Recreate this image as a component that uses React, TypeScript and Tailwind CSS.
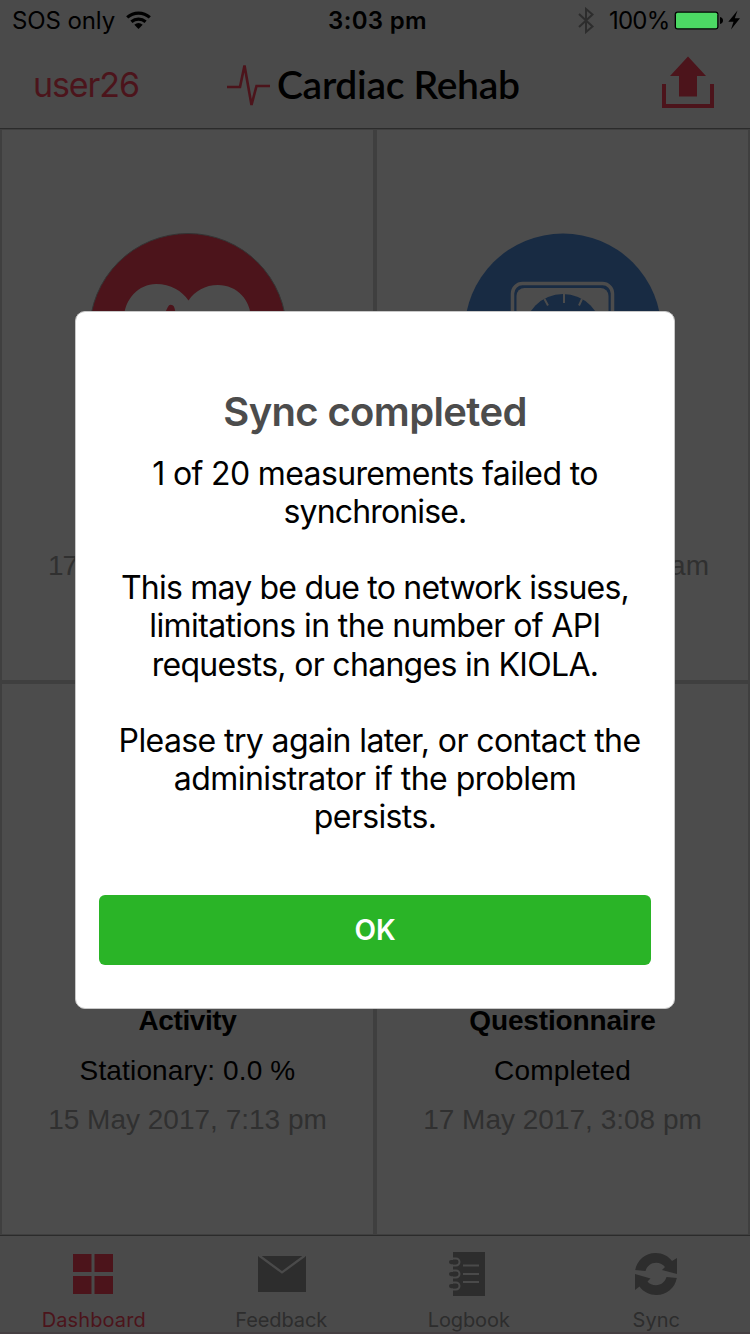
import React from "react";

const INTER = "font-['Inter','Liberation_Sans',sans-serif]";
const HELV = "font-['Liberation_Sans',sans-serif]";

function StatusBar() {
  return (
    <div className="flex h-10 items-center justify-between pl-3 pr-[9px] text-[24px] leading-10 text-black">
      <div className="flex w-[230px] items-center">
        <span className="w-[114px] whitespace-nowrap pt-0.5 tracking-[-0.1px]">SOS only</span>
        <svg className="h-[20px] w-[26px]" viewBox="0 0 26 20" fill="none" stroke="#000" strokeWidth="3.2">
          <path d="M1.2 7.4A17 17 0 0 1 23.8 7.4" />
          <path d="M5.4 11.7A11 11 0 0 1 19.6 11.7" />
          <path d="M12.5 19L8.3 14.8Q12.5 11.4 16.7 14.8Z" fill="#000" stroke="none" />
        </svg>
      </div>
      <span className="whitespace-nowrap pl-0.5 pt-0.5 font-semibold tracking-[0.3px]">3:03 pm</span>
      <div className="flex w-[230px] items-center justify-end">
        <svg className="mr-[15px] h-[27px] w-[16px]" viewBox="0 0 16 27" fill="none" stroke="#2d2d2d" strokeWidth="2">
          <path d="M1 7L14.5 19.5L8 25V2L14.5 7.500L1 20" />
        </svg>
        <span className="w-[65px] whitespace-nowrap pt-0.5 tracking-[-0.8px]">100%</span>
        <svg className="h-[20px] w-[67px]" viewBox="0 0 67 20">
          <rect x="0.700" y="1.500" width="43.800" height="18" rx="3" fill="#000" />
          <rect x="2" y="2.800" width="41.200" height="15.400" rx="1.500" fill="#4cd964" />
          <path d="M46 7Q49 7.600 49 10.500T46 14Z" />
          <path d="M63.500 0.500L54.300 11.700H59.500L57 19.500L66 8.300H60.800Z" />
        </svg>
      </div>
    </div>
  );
}

function NavBar() {
  return (
    <div className="flex h-[88px] items-center pl-[33px] text-[#4c141b]">
      <span className="w-[194px] whitespace-nowrap text-[34px] tracking-[-1.1px]">user26</span>
      <svg className="h-[46px] w-[44px]" viewBox="0 0 44 46" fill="none" stroke="#4c141b" strokeWidth="2.600">
        <path d="M0 26H13L17.500 4.500L24.500 44L29.500 25H43" />
      </svg>
      <span className="ml-[6px] w-[384px] whitespace-nowrap font-['Lato',sans-serif] text-[39px] font-semibold tracking-[-0.3px] text-black">Cardiac Rehab</span>
      <svg className="-mt-[6px] h-[54px] w-[54px]" viewBox="0 0 54 54">
        <path d="M27 2.500L45 22H36V42.500H18V22H9Z" fill="#4c141b" />
        <path d="M3 30V52H51V30" fill="none" stroke="#4c141b" strokeWidth="4" />
      </svg>
    </div>
  );
}

function HeartBadge() {
  return (
    <svg className="h-[198px] w-[198px]" viewBox="0 0 198 198">
      <circle cx="99" cy="99" r="98.500" fill="#4c141b" stroke="#343434" />
      <path d="M100 170C61 140 35 116 35 86C35 66 50 51 67 51C82 51 93 58 99.500 67.500C106 58 116 52 129 52C148 52 162 67 162 86C162 116 138 140 100 170Z" fill="#4c4c4c" />
      <path d="M52 100H70L82 75.500L94 124L104 100H146" fill="none" stroke="#4c141b" strokeWidth="7" strokeLinecap="round" strokeLinejoin="round" />
    </svg>
  );
}

function ScaleBadge() {
  return (
    <svg className="h-[198px] w-[198px]" viewBox="0 0 198 198">
      <circle cx="99" cy="99" r="98.500" fill="#182b43" />
      <rect x="48.500" y="50.500" width="100" height="100" rx="10" fill="#182b43" stroke="#4c4c4c" strokeWidth="3.500" />
      <rect x="52.500" y="55" width="92" height="92" rx="8" fill="#4c4c4c" />
      <circle cx="99" cy="100" r="39" fill="#182b43" />
      <path d="M100 61V70M80.500 66L84 72.500M118 66L115 72.500" stroke="#4c4c4c" strokeWidth="2" />
    </svg>
  );
}

interface BadgeCellProps {
  badge: React.ReactNode;
  date: string;
  dateClass: string;
}

function BadgeCell({ badge, date, dateClass }: BadgeCellProps) {
  return (
    <div className={`flex flex-col items-center justify-between bg-[#4c4c4c] pb-[89px] pt-[103px] text-[28px] ${HELV}`}>
      {badge}
      <span className={`w-full leading-[50px] text-[#303030] ${dateClass}`}>{date}</span>
    </div>
  );
}

interface InfoCellProps {
  title: string;
  titleClass: string;
  value: string;
  date: string;
}

function InfoCell({ title, titleClass, value, date }: InfoCellProps) {
  return (
    <div className={`flex flex-col items-center justify-end bg-[#4c4c4c] text-[28px] ${HELV}`}>
      <div className="flex h-[238px] flex-col items-center whitespace-nowrap leading-[49.5px]">
        <span className={`font-bold text-black ${titleClass}`}>{title}</span>
        <span className="tracking-[0.15px] text-black">{value}</span>
        <span className="text-[#303030]">{date}</span>
      </div>
    </div>
  );
}

function TabIcon({ name }: { name: string }) {
  if (name === "Dashboard")
    return (
      <svg className="mr-0.5 h-[48px] w-[48px]" viewBox="0 0 48 48" fill="#4c141b">
        <path d="M4 4H22.500V22H4ZM25.500 4H44V22H25.500ZM4 26H22.500V44H4ZM25.500 26H44V44H25.500Z" />
      </svg>
    );
  if (name === "Feedback")
    return (
      <svg className="ml-0.5 h-[48px] w-[48px]" viewBox="0 0 48 48">
        <path d="M0 6H48V42H0Z" fill="#2d2d2d" />
        <path d="M1 5.500L24 22.500L47 5.500" fill="none" stroke="#4a4a4a" strokeWidth="2.200" />
      </svg>
    );
  if (name === "Logbook")
    return (
      <svg className="mr-0.5 h-[48px] w-[48px]" viewBox="0 0 48 48">
        <path d="M9 2H41V46H9Z" fill="#2d2d2d" />
        <path d="M19 15.500H35M19 24H35M19 32H35" stroke="#4a4a4a" strokeWidth="2" />
        <path d="M9 8.500H12A3.500 3.500 0 0 1 12 15.500H9M9 20.500H12A3.500 3.500 0 0 1 12 27.500H9M9 32.500H12A3.500 3.500 0 0 1 12 39.500H9" fill="none" stroke="#4a4a4a" strokeWidth="2" />
        <g fill="#2d2d2d">
          <rect x="5" y="10" width="8.500" height="4.200" rx="2.100" />
          <rect x="5" y="22" width="8.500" height="4.200" rx="2.100" />
          <rect x="5" y="34" width="8.500" height="4.200" rx="2.100" />
        </g>
      </svg>
    );
  return (
    <svg className="h-[48px] w-[48px]" viewBox="0 0 48 48" fill="#2d2d2d">
      <path d="M3.200 20C5 10 13.500 3 23.500 3C30.500 3 36.500 6 40 11L45 8V24L30 20L33 17C31 14.500 28 12.800 24 12.800C19 12.800 15 16 13.500 21Z" />
      <path d="M44.800 28C43 38 34.500 45 24.500 45C17.500 45 11.500 42 7.500 36.500L3 40V24L18.500 28.500L15.500 31.500C17.500 34 20.500 35.200 24 35.200C29 35.200 33 32 34.500 27Z" />
    </svg>
  );
}

const TABS = [
  { name: "Dashboard", tone: "text-[#4c141b] tracking-[0.1px]" },
  { name: "Feedback", tone: "text-[#2d2d2d] tracking-[-0.1px]" },
  { name: "Logbook", tone: "text-[#2d2d2d] tracking-[-0.1px]" },
  { name: "Sync", tone: "text-[#2d2d2d]" },
];

function TabBar() {
  return (
    <div className="flex h-[99px] justify-around border-b-2 border-t border-b-[#453f42] border-t-[#2b2b2b] bg-[#4a4a4a]">
      {TABS.map(({ name, tone }) => (
        <div key={name} className={`flex w-[187px] flex-col items-center pt-[14px] text-[20px] ${tone}`}>
          <TabIcon name={name} />
          <span className="mt-[10px] leading-6">{name}</span>
        </div>
      ))}
    </div>
  );
}

const LINES = [
  { text: "1 of 20 measurements failed to", fit: "tracking-[-0.64px]" },
  { text: "synchronise.", fit: "tracking-[-0.85px]" },
  { text: "", fit: "" },
  { text: "This may be due to network issues,", fit: "tracking-[-0.8px]" },
  { text: "limitations in the number of API", fit: "tracking-[-0.62px]" },
  { text: "requests, or changes in KIOLA.", fit: "tracking-[-0.7px]" },
  { text: "", fit: "" },
  { text: "Please try again later, or contact the", fit: "pl-[9px] tracking-[-0.6px]" },
  { text: "administrator if the problem", fit: "tracking-[-0.55px]" },
  { text: "persists.", fit: "tracking-[-0.6px]" },
];

function Dialog() {
  return (
    <div className="absolute left-[75px] top-[311px] flex h-[698px] w-[600px] flex-col items-center rounded-[10px] border border-[#c8c8c8] bg-white px-[23px]">
      <h2 className="mt-[76px] whitespace-nowrap text-[40px] font-semibold leading-[48px] tracking-[-0.65px] text-[#4c4c4c]">Sync completed</h2>
      <div className="mt-[18.600px] text-center text-[32px] text-black">
        {LINES.map(({ text, fit }, i) => (
          <p key={i} className={`h-[38.2px] whitespace-nowrap leading-[38px] ${fit}`}>{text}</p>
        ))}
      </div>
      <button className="mt-[58.400px] h-[70px] w-[552px] rounded-[6px] bg-[#2ab427] pt-px text-[28px] font-semibold text-white">OK</button>
    </div>
  );
}

export default function App() {
  return (
    <div className={`relative flex h-[1334px] w-[750px] flex-col overflow-hidden bg-[#4a4a4a] ${INTER}`}>
      <StatusBar />
      <NavBar />
      <div className="h-[2px] border-t border-[#2b2b2b] bg-[#3f3f3f]" />
      <div className="grid flex-1 grid-cols-2 grid-rows-2 gap-1 bg-[#3f3f3f] px-0.5 pb-px">
        <BadgeCell badge={<HeartBadge />} date="17" dateClass="pl-[46px] text-left tracking-[-1px]" />
        <BadgeCell badge={<ScaleBadge />} date="am" dateClass="pr-[39px] text-right" />
        <InfoCell title="Activity" titleClass="tracking-[-0.4px]" value="Stationary: 0.0 %" date="15 May 2017, 7:13 pm" />
        <InfoCell title="Questionnaire" titleClass="tracking-[-0.15px]" value="Completed" date="17 May 2017, 3:08 pm" />
      </div>
      <TabBar />
      <Dialog />
    </div>
  );
}
